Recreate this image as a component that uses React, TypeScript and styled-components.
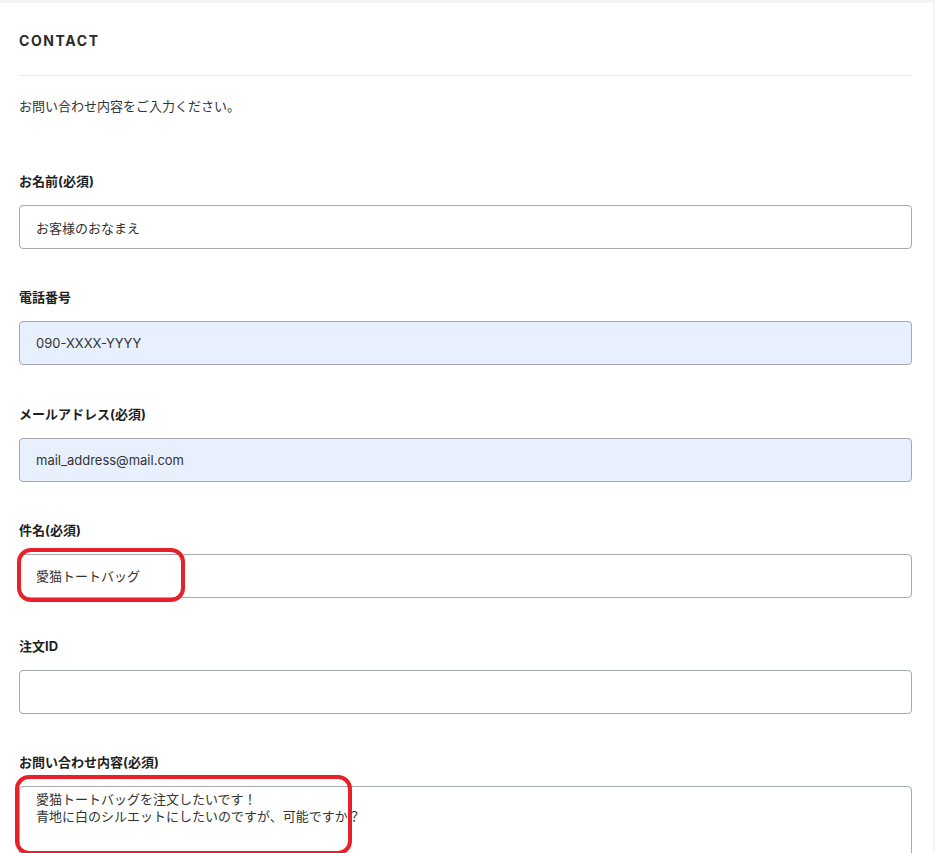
import React from "react";
import styled, { createGlobalStyle } from "styled-components";

const GlobalStyle = createGlobalStyle`
  html, body {
    margin: 0;
    padding: 0;
    background: #ffffff;
  }
  body {
    font-family: Inter, "Noto Sans CJK JP", sans-serif;
    color: #222;
  }
`;

const Page = styled.div`
  position: relative;
  width: 935px;
  height: 853px;
  overflow: hidden;
  background: #fff;
  box-sizing: border-box;
  border-top: 3px solid #f4f4f4;
  border-right: 2px solid #f4f4f4;
`;

const Content = styled.div`
  padding: 0 21px 0 19px;
`;

const Heading = styled.h2`
  margin: 0;
  height: 73px;
  display: flex;
  align-items: center;
  font-size: 14px;
  font-weight: 700;
  letter-spacing: 1.6px;
  color: #2b2b2b;
  border-bottom: 1px solid #ececec;
  box-sizing: border-box;
  padding-top: 2px;
`;

const Intro = styled.p`
  margin: 20px 0 0;
  font-size: 13px;
  line-height: 20px;
  color: #333;
`;

const Fields = styled.div`
  margin-top: 55px;
  display: flex;
  flex-direction: column;
  gap: 38.25px;
`;

const Field = styled.div`
  position: relative;
  display: flex;
  flex-direction: column;
  gap: 14px;
`;

const Label = styled.label`
  font-size: 13px;
  line-height: 20px;
  font-weight: 700;
  color: #1f1f1f;
`;

const Input = styled.div<{ $filled?: boolean }>`
  height: 44px;
  box-sizing: border-box;
  border: 1px solid #a3a8b1;
  border-radius: 4px;
  background: ${(p) => (p.$filled ? "#e8f0fe" : "#fff")};
  padding: 0 16px;
  display: flex;
  align-items: center;
  font-size: 13px;
  color: #333;
`;

const TextArea = styled.div`
  height: 120px;
  box-sizing: border-box;
  border: 1px solid #a3a8b1;
  border-radius: 4px;
  padding: 4px 16px;
  font-size: 13px;
  line-height: 17px;
  color: #333;
  white-space: pre-line;
`;

const Mark = styled.div<{ $w: number; $h: number; $l: number; $t: number }>`
  position: absolute;
  left: ${(p) => p.$l}px;
  top: ${(p) => p.$t}px;
  width: ${(p) => p.$w}px;
  height: ${(p) => p.$h}px;
  box-sizing: border-box;
  border: 4px solid #e8202a;
  border-radius: 14px;
  pointer-events: none;
`;

const fields = [
  { label: "お名前(必須)", value: "お客様のおなまえ" },
  { label: "電話番号", value: "090-XXXX-YYYY", filled: true },
  { label: "メールアドレス(必須)", value: "mail_address@mail.com", filled: true },
  { label: "件名(必須)", value: "愛猫トートバッグ", mark: true },
  { label: "注文ID", value: "" },
];

export default function App() {
  return (
    <>
      <GlobalStyle />
      <Page>
        <Content>
          <Heading>CONTACT</Heading>
          <Intro>お問い合わせ内容をご入力ください。</Intro>
          <Fields>
            {fields.map((f) => (
              <Field key={f.label}>
                <Label>{f.label}</Label>
                <Input $filled={f.filled}>{f.value}</Input>
                {f.mark && <Mark $l={-2} $t={28} $w={168} $h={54} />}
              </Field>
            ))}
            <Field>
              <Label>お問い合わせ内容(必須)</Label>
              <TextArea>
                {"愛猫トートバッグを注文したいです！\n青地に白のシルエットにしたいのですが、可能ですか？"}
              </TextArea>
              <Mark $l={-4} $t={23} $w={337} $h={80} />
            </Field>
          </Fields>
        </Content>
      </Page>
    </>
  );
}
